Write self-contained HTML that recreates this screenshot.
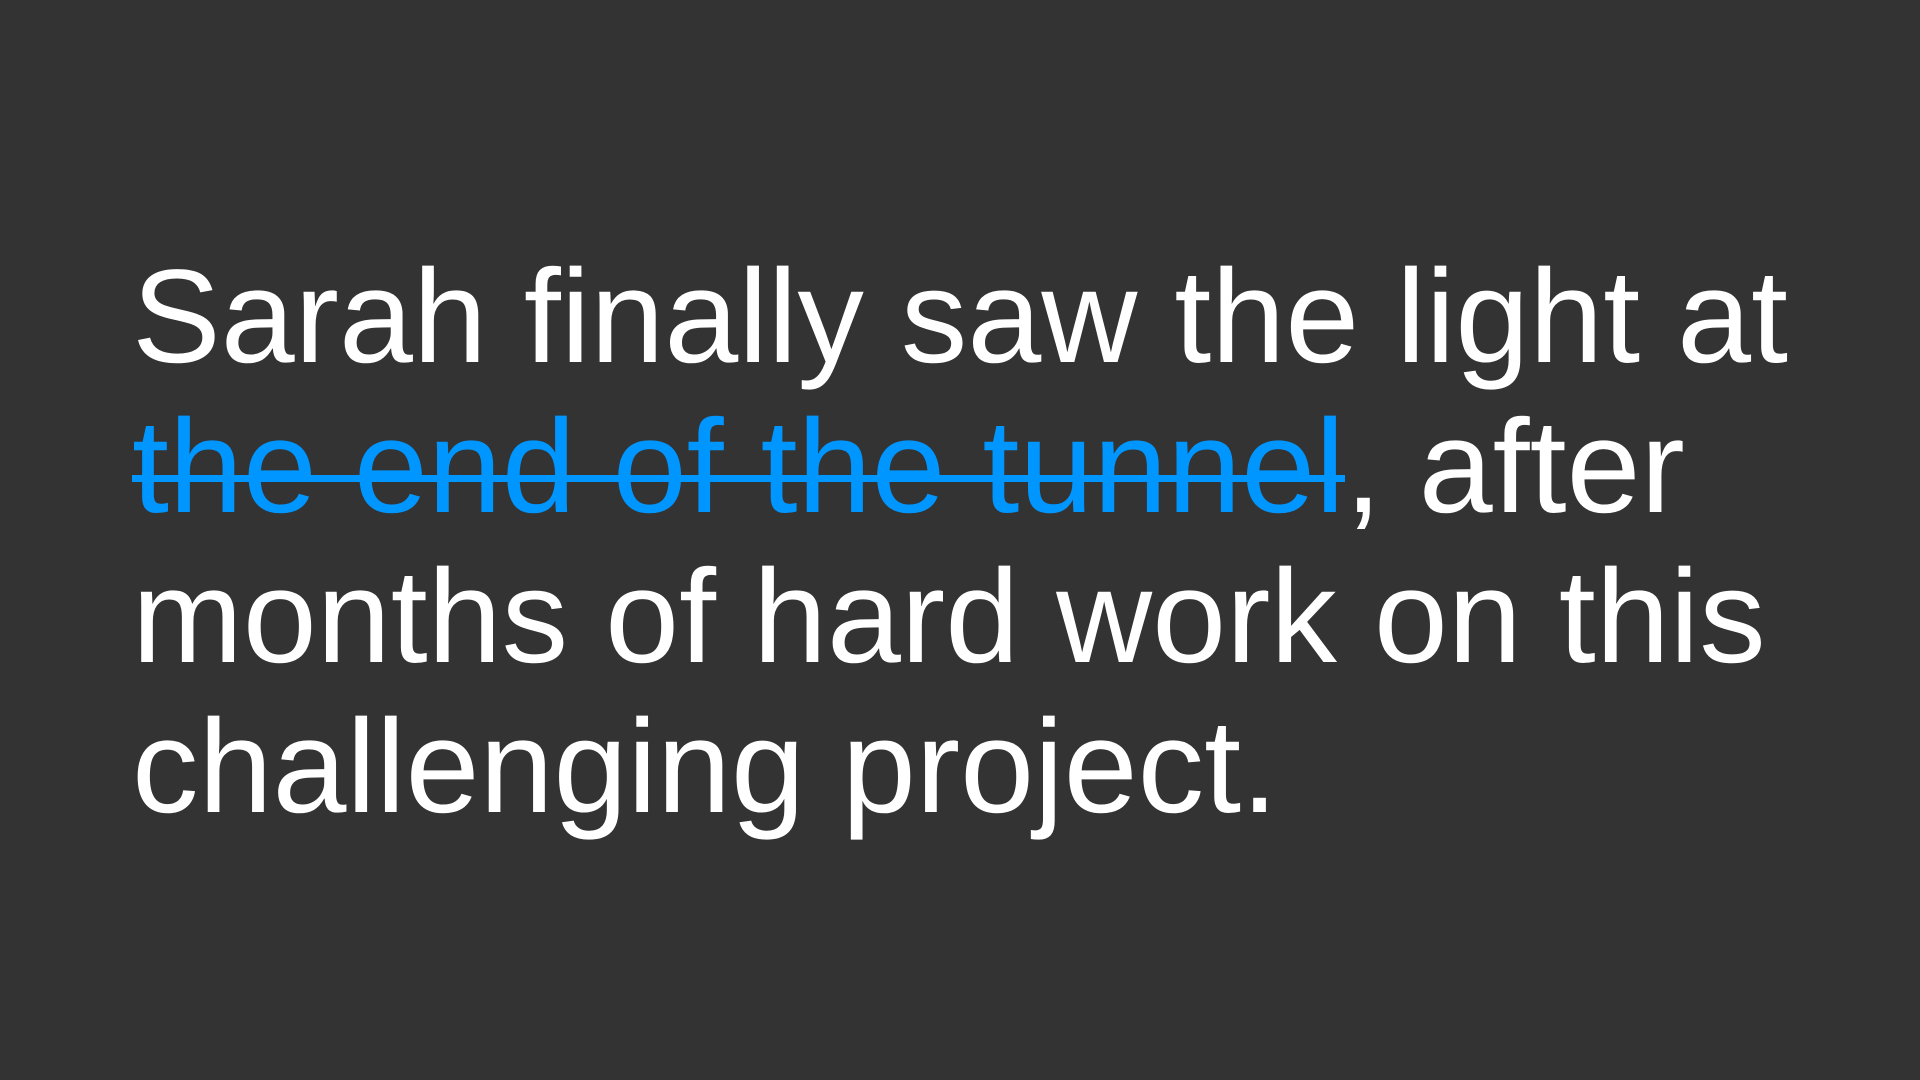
<!DOCTYPE html>
<html>
<head>
<meta charset="utf-8">
<style>
html,body{margin:0;padding:0;}
body{width:1920px;height:1080px;background:#333333;overflow:hidden;position:relative;}
.t{position:absolute;left:132px;top:242px;font-family:"Liberation Sans",Arial,sans-serif;font-size:133px;line-height:150px;color:#ffffff;white-space:nowrap;}
.s{color:#0096ff;position:relative;}
.s::after{content:"";position:absolute;left:0;right:0;top:82px;height:7px;background:#0096ff;}
</style>
</head>
<body>
<div class="t">Sarah finally saw the light at<br><span class="s">the end of the tunnel</span>, after<br>months of hard work on this<br>challenging project.</div>
</body>
</html>
